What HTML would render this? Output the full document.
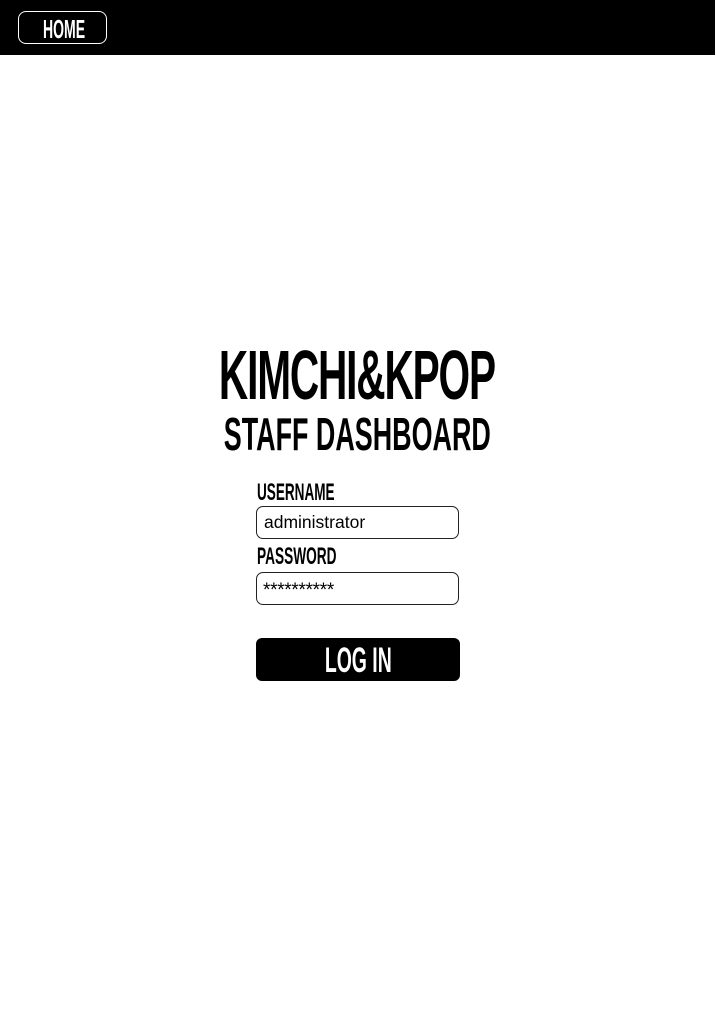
<!DOCTYPE html>
<html><head><style>
body{margin:0;width:716px;height:1024px;background:#fff;position:relative;overflow:hidden;font-family:"Liberation Sans",sans-serif}
.abs{position:absolute}
.c{display:inline-block;white-space:nowrap}
.b{font-weight:bold}
</style></head><body>
<div class="abs" style="left:0;top:0;width:715px;height:55px;background:#000"></div>
<div class="abs" style="left:18px;top:11px;width:87px;height:31px;border:1.5px solid #fff;border-radius:8px"></div>
<div class="abs b" style="left:0;top:14px;width:127px;text-align:center;color:#fff;font-size:26px;line-height:30px"><span class="c" style="transform:scaleX(0.54)">HOME</span></div>

<div class="abs b" style="left:0;top:339px;width:714px;text-align:center;font-size:70px;line-height:72px;letter-spacing:-2px"><span class="c" style="transform:scaleX(0.58)">KIMCHI&amp;KPOP</span></div>
<div class="abs b" style="left:0;top:410px;width:715px;text-align:center;font-size:46px;line-height:48px"><span class="c" style="transform:scaleX(0.585)">STAFF DASHBOARD</span></div>

<div class="abs b" style="left:257px;top:480px;font-size:24px;line-height:26px;transform:scaleX(0.565);transform-origin:left;white-space:nowrap">USERNAME</div>
<div class="abs" style="left:256px;top:506px;width:201px;height:31px;border:1.5px solid #222;border-radius:7px"></div>
<div class="abs" style="left:264px;top:512px;font-size:17.5px;line-height:20px">administrator</div>

<div class="abs b" style="left:257px;top:544px;font-size:24px;line-height:26px;transform:scaleX(0.57);transform-origin:left;white-space:nowrap">PASSWORD</div>
<div class="abs" style="left:256px;top:572px;width:201px;height:31px;border:1.5px solid #222;border-radius:7px"></div>
<div class="abs" style="left:263px;top:581px;font-size:19px;line-height:20px;letter-spacing:-0.3px">**********</div>

<div class="abs" style="left:256px;top:638px;width:204px;height:43px;background:#000;border-radius:6px"></div>
<div class="abs b" style="left:256px;top:642px;width:204px;text-align:center;color:#fff;font-size:35px;line-height:38px"><span class="c" style="transform:scaleX(0.555)">LOG IN</span></div>
</body></html>
